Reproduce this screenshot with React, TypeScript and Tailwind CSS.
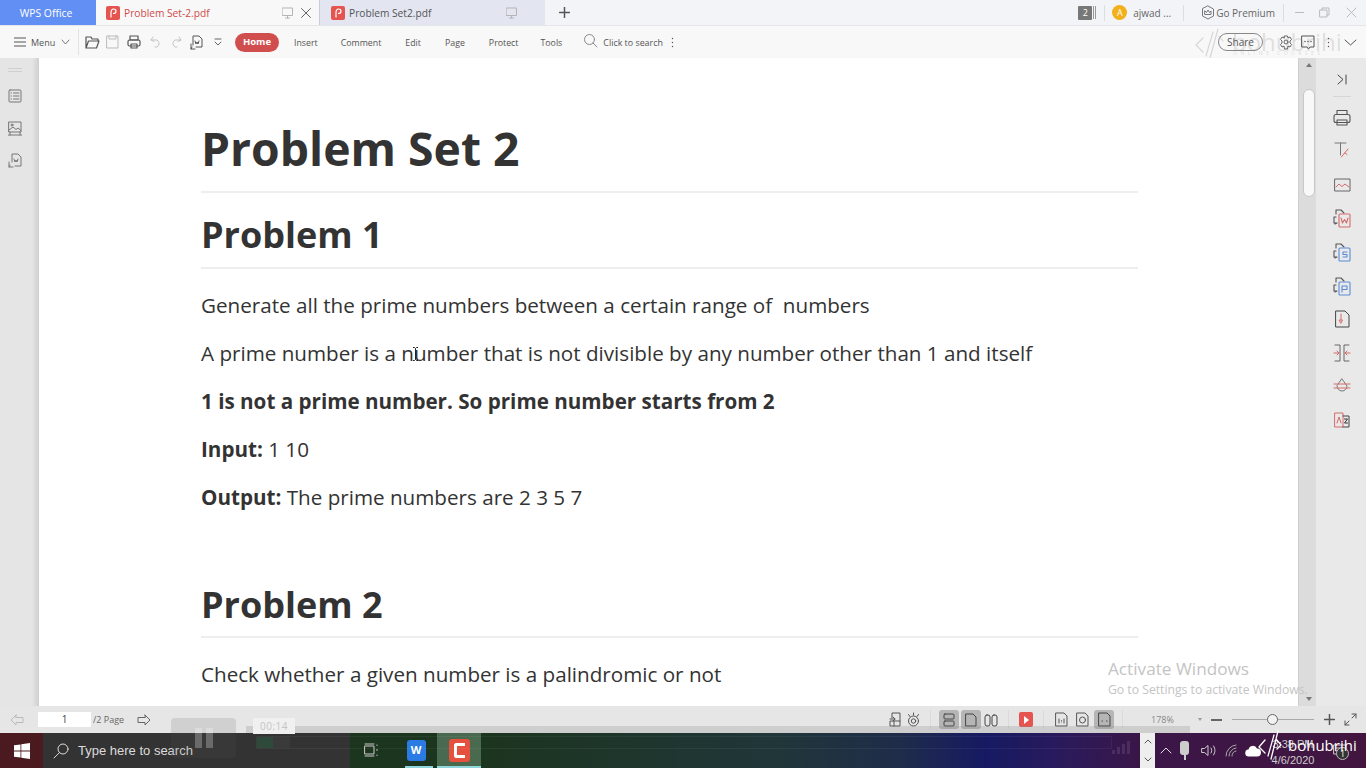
import React from "react";

const F = { fontFamily: '"Open Sans","Noto Sans",sans-serif' };

function Svg({ w = 18, h = 18, children, c = "#555", sw = 1.2, vb }: any) {
  return (
    <svg width={w} height={h} viewBox={vb || `0 0 ${w} ${h}`} fill="none" stroke={c} strokeWidth={sw} strokeLinecap="round" strokeLinejoin="round" className="shrink-0 block">
      {children}
    </svg>
  );
}

function PdfIcon() {
  return (
    <div className="w-[14px] h-[14px] rounded-[2px] bg-[#e5544f] flex items-center justify-center shrink-0">
      <svg width="10" height="10" viewBox="0 0 10 10" fill="none" stroke="#fff" strokeWidth="1.2">
        <path d="M3 9.500 L3 5 Q3 1 5.500 1 Q8 1 8 3.200 Q8 5.500 5 5.500" />
      </svg>
    </div>
  );
}

function Monitor({ c = "#b5b5b5" }: any) {
  return (
    <Svg w={11} h={12} c={c} sw={1}>
      <rect x="0.500" y="1" width="10" height="7.500" />
      <path d="M5.500 8.500V11M3.500 11h4" />
    </Svg>
  );
}

function TitleBar() {
  return (
    <div className="h-[26px] flex bg-[#f3f4f7] shrink-0 border-b border-[#e4e6ea]">
      <div className="w-[96px] bg-[#618ff3] text-white text-[10.400px] flex items-center justify-center pt-[3px] pr-[4px]">WPS Office</div>
      <div className="w-[224px] bg-[#f8f8f8] flex items-center pl-[10px] pr-[8px] border-r border-[#c9ccd6]">
        <PdfIcon />
        <span className="ml-[4px] text-[10.200px] text-[#d0494a] pt-[3px]">Problem Set-2.pdf</span>
        <div className="ml-auto flex items-center gap-[8px]">
          <Monitor />
          <Svg w={10} h={10} c="#666" sw={1}><path d="M0.500 0.500l9 9M9.500 0.500l-9 9" /></Svg>
        </div>
      </div>
      <div className="w-[225px] bg-[#e3e6f1] flex items-center pl-[11px]">
        <PdfIcon />
        <span className="ml-[4px] w-[83px] text-[10.200px] text-[#555] pt-[3px]">Problem Set2.pdf</span>
        <div className="ml-[74px]"><Monitor /></div>
      </div>
      <div className="ml-[14px] flex items-center">
        <Svg w={11} h={11} c="#555" sw={1.500}><path d="M5.500 0.500v10M0.500 5.500h10" /></Svg>
      </div>
      <div className="ml-auto flex items-center text-[10px] text-[#666]">
        <div className="w-[14px] h-[14px] bg-[#777] rounded-[1px] text-white text-[9px] flex items-center justify-center">2</div>
        <div className="ml-[1px] h-[13px] w-[3px] border-x border-[#999]" />
        <div className="ml-[8px] h-[16px] w-px bg-[#ddd]" />
        <div className="ml-[7px] w-[15px] h-[15px] rounded-full bg-[#f1b01c] text-white text-[9px] flex items-center justify-center">A</div>
        <span className="ml-[6px] pt-[2px]">ajwad ...</span>
        <div className="ml-[12px] h-[16px] w-px bg-[#ddd]" />
        <div className="ml-[17px]">
          <Svg w={14} h={15} c="#777" sw={1}>
            <path d="M7 1l5.500 3v7L7 14l-5.500-3V4z" />
            <path d="M4 6l1.500 1.500L7 5l1.500 2.500L10 6v3.500H4z" />
          </Svg>
        </div>
        <span className="ml-[1px] pt-[2px]">Go Premium</span>
        <div className="ml-[8px] h-[18px] w-px bg-[#ddd]" />
        <div className="ml-[11px] w-[9px] h-px bg-[#bbb]" />
        <div className="ml-[15px]">
          <Svg w={11} h={11} c="#bbb" sw={1}><rect x="1" y="3" width="7" height="7" /><path d="M3 3V1h7v7H8" /></Svg>
        </div>
        <div className="ml-[16px] mr-[9px]">
          <Svg w={11} h={11} c="#bbb" sw={1}><path d="M1 1l9 9M10 1l-9 9" /></Svg>
        </div>
      </div>
    </div>
  );
}

const tabs: [string, number][] = [["Insert", 23], ["Comment", 24], ["Edit", 24], ["Page", 24], ["Protect", 22], ["Tools", 0]];

function ToolBar() {
  return (
    <div className="h-[32px] flex items-center bg-[#f8f8f8] shrink-0 relative text-[#555]">
      <div className="ml-[14px]">
        <Svg w={12} h={10} c="#555" sw={1.100}><path d="M0 1h12M0 5h12M0 9h12" /></Svg>
      </div>
      <span className="ml-[5px] w-[24px] text-[9px] pt-[2px]">Menu</span>
      <div className="ml-[6px]"><Svg w={9} h={6} c="#777" sw={1}><path d="M1 1l3.500 4 3.500-4" /></Svg></div>
      <div className="ml-[8px] h-[26px] w-px bg-[#e2e2e2]" />
      <div className="ml-[6px]">
        <Svg w={15} h={14} c="#555"><path d="M1 13V2h5l1 2h6v2M1 13l2.500-7H14l-2.500 7z" /></Svg>
      </div>
      <div className="ml-[6px]"><Svg w={13} h={14} c="#bbb" sw={1}><path d="M1 1h11v12H1zM3 1v3h7V1" /></Svg></div>
      <div className="ml-[8px]">
        <Svg w={14} h={14} c="#555"><rect x="3" y="1" width="8" height="4" /><rect x="1" y="5" width="12" height="6" rx="1.500" /><rect x="4" y="9" width="6" height="4" /></Svg>
      </div>
      <div className="ml-[9px]"><Svg w={12} h={12} c="#c4c4c4" sw={1}><path d="M3 1L1 4l3 1.500M1 4h6a4 4 0 0 1 0 7H5" /></Svg></div>
      <div className="ml-[8px]"><Svg w={12} h={12} c="#c4c4c4" sw={1}><path d="M9 1l2 3-3 1.500M11 4H5a4 4 0 0 0 0 7h2" /></Svg></div>
      <div className="ml-[7px]">
        <Svg w={14} h={15} c="#555" sw={1}><path d="M4 10V1h6l3 3v8H7M2 9v5h4M3 12l-1 2" /><path d="M6 6l1 3 1-2 1 2 1-3" /></Svg>
      </div>
      <div className="ml-[11px]"><Svg w={8} h={9} c="#666" sw={1}><path d="M1 1h6M1 4l3 3 3-3" /></Svg></div>
      <div className="ml-[13px] w-[44px] h-[19px] rounded-full bg-[#d14e4e] text-white text-[9.500px] font-bold flex items-center justify-center">Home</div>
      <div className="ml-[15px] flex items-center text-[8.800px] pt-[3px]">
        {tabs.map(([t, m]) => (
          <span key={t} style={{ marginRight: m }}>{t}</span>
        ))}
      </div>
      <div className="ml-[21px] mt-[-3px]">
        <Svg w={15} h={15} c="#888" sw={1}><circle cx="6.500" cy="6.500" r="5" /><path d="M10 10l4 4" /></Svg>
      </div>
      <span className="ml-[5px] text-[8.900px] pt-[1px]">Click to search</span>
      <div className="ml-[8px]"><Svg w={3} h={11} c="#555" sw={1.400}><path d="M1.500 1.500v.01M1.500 5.500v.01M1.500 9.500v.01" /></Svg></div>
      <div className="ml-auto flex items-center">
        <div className="w-[45px] h-[18px] rounded-full border border-[#888] text-[10px] flex items-center justify-center">Share</div>
        <div className="ml-[16px]">
          <Svg w={14} h={15} c="#666" sw={1}><path d="M5.500 1h3l.5 2 2-1 1.500 2.500L11 6v2l1.500 1.500L11 12l-2-1-.5 3h-3L5 11l-2 1-1.500-2.500L3 8V6L1.500 4.500 3 2l2 1z" /><circle cx="7" cy="7" r="2" /></Svg>
        </div>
        <div className="ml-[8px]">
          <Svg w={14} h={15} c="#555" sw={1}><path d="M1 1h12v11H9l-1.500 2L6 12H1z" /><path d="M4 6.500h.01M7 6.500h.01M10 6.500h.01" strokeWidth="1.500" /></Svg>
        </div>
        <div className="ml-[12px]"><Svg w={3} h={11} c="#555" sw={1.400}><path d="M1.500 1.500v.01M1.500 5.500v.01M1.500 9.500v.01" /></Svg></div>
        <div className="ml-[14px] mr-[9px]"><Svg w={13} h={7} c="#555" sw={1}><path d="M1 1l5.500 5 5.500-5" /></Svg></div>
      </div>
    </div>
  );
}

function LeftRail() {
  return (
    <div className="w-[39px] bg-[linear-gradient(90deg,#e5e5e5_32px,#cfcfcf_39px)] shrink-0 flex flex-col items-center pr-[9px] pt-[10px]">
      <div className="w-[14px] h-[4px] border-y border-[#cfcfcf]" />
      <div className="mt-[17px]">
        <Svg w={14} h={14} c="#777" sw={1}><rect x="1" y="1" width="12" height="12" rx="1" /><path d="M3 4h.5M5.500 4H11M3 7h.5M5.500 7H11M3 10h.5M5.500 10H11" /></Svg>
      </div>
      <div className="mt-[18px]">
        <Svg w={14} h={15} c="#777" sw={1}><rect x="1" y="1" width="12" height="10" /><path d="M1 9l4-3 3 2.500 2-1.500 3 2.500M0 14h14M2 11v3M12 11v3" /><circle cx="4" cy="4" r="1" /></Svg>
      </div>
      <div className="mt-[17px]">
        <Svg w={15} h={15} c="#777" sw={1}><path d="M4 9V1h6l3 3v9H7" /><path d="M1 9v5h4M2 12l-1 2" /><path d="M6 6l1 3 1-2 1 2 1-3" /></Svg>
      </div>
    </div>
  );
}

function Doc() {
  return (
    <div className="w-[1259px] bg-white shrink-0 overflow-hidden pl-[162px] pr-[160px] text-[#333]" style={F}>
      <h1 className="mt-[55px] text-[46.300px] leading-[72px] font-bold pb-[6px] border-b-2 border-[#eee] h-[80px]">Problem Set 2</h1>
      <h2 className="mt-[16px] text-[36px] leading-[52px] font-bold h-[60px] border-b-2 border-[#eee]">Problem 1</h2>
      <p className="mt-[20px] text-[20.630px] leading-[32px]">Generate all the prime numbers between a certain range of&nbsp; numbers</p>
      <p className="mt-[16px] text-[20.630px] leading-[32px]">A prime number is a number that is not divisible by any number other than 1 and itself</p>
      <p className="mt-[16px] text-[20.630px] leading-[32px] font-bold">1 is not a prime number. So prime number starts from 2</p>
      <p className="mt-[16px] text-[20.630px] leading-[32px]"><b>Input:</b> 1 10</p>
      <p className="mt-[16px] text-[20.630px] leading-[32px]"><b>Output:</b> The prime numbers are 2 3 5 7</p>
      <h2 className="mt-[65px] text-[36px] leading-[54px] font-bold h-[60px] border-b-2 border-[#eee]">Problem 2</h2>
      <p className="mt-[20px] text-[20.630px] leading-[32px]">Check whether a given number is a palindromic or not</p>
    </div>
  );
}

const R = "#d46a6a";
const B = "#5b8bd8";

function ConvIcon({ c, letter }: any) {
  return (
    <Svg w={20} h={20} c={c} sw={1.100}>
      <path d="M4 5V1h5l3 3" stroke="#555" />
      <path d="M2 8h2M2 8v6h3M3 15l2-1" stroke="#555" />
      <rect x="7" y="5" width="11" height="13" rx="1" />
      {letter === "W" && <path d="M9 9l1.500 5 2-3.500 2 3.500 1.500-5" />}
      {letter === "S" && <path d="M15 9h-4v2.500h4V14h-4" />}
      {letter === "P" && <path d="M10 15V9h5v3.500h-5" />}
    </Svg>
  );
}

function RightRail() {
  return (
    <div className="flex-1 flex">
      <div className="w-[18px] bg-[#dcdcdc] flex flex-col items-center pl-[4px] pr-[1px] border-l border-[#d0d0d0]">
        <div className="mt-[5px] w-0 h-0 border-x-[3px] border-x-transparent border-b-[4px] border-b-[#777]" />
        <div className="mt-[22px] w-[12px] h-[108px] bg-[#f8f8f8] rounded-full border border-[#c8c8c8]" />
        <div className="mt-auto mb-[5px] w-0 h-0 border-x-[3px] border-x-transparent border-t-[4px] border-t-[#777]" />
      </div>
      <div className="flex-1 bg-[#e9e9e9] flex flex-col items-center pl-[2px] pt-[16px]">
        <Svg w={10} h={11} c="#444" sw={1}><path d="M1 1l5 4.500L1 10M9 1v9" /></Svg>
        <div className="mt-[11px] w-[18px] h-px bg-[#d6d6d6]" />
        <div className="mt-[12px]">
          <Svg w={18} h={18} c="#555" sw={1.100}><rect x="4" y="1.500" width="10" height="4" /><rect x="1" y="5.500" width="16" height="8" rx="2" /><rect x="4" y="11" width="10" height="5" /></Svg>
        </div>
        <div className="mt-[14px]">
          <Svg w={18} h={18} c="#777" sw={1}><path d="M2 2h11M7.500 2v12" /><path d="M15 8l-5 6-1.500 2" stroke={R} /><path d="M12 12l2 1.500" stroke={R} /></Svg>
        </div>
        <div className="mt-[19px]">
          <Svg w={17} h={14} c="#666" sw={1}><rect x="1" y="1" width="15" height="12" /><path d="M2 9l3-3 3 2.500L11 6l4 3" stroke={R} /></Svg>
        </div>
        <div className="mt-[17px]"><ConvIcon c={R} letter="W" /></div>
        <div className="mt-[14px]"><ConvIcon c={B} letter="S" /></div>
        <div className="mt-[14px]"><ConvIcon c={B} letter="P" /></div>
        <div className="mt-[13px]">
          <Svg w={15} h={18} c="#444" sw={1}><path d="M1 1h9l4 4v12H1z" /><path d="M6 4v6M4.500 10h3L6 13z" stroke={R} /></Svg>
        </div>
        <div className="mt-[16px]">
          <Svg w={18} h={18} c="#666" sw={1}><path d="M2 1h5v16H2M16 1h-5v16h5" /><path d="M1 9h5M4 7l2 2-2 2M17 9h-5M14 7l-2 2 2 2" stroke={R} /></Svg>
        </div>
        <div className="mt-[15px]">
          <Svg w={18} h={18} c="#777" sw={1}><path d="M9 2l5 7a5 5 0 1 1-10 0z" /><path d="M1 7h16M1 11h16" stroke={R} /></Svg>
        </div>
        <div className="mt-[16px]">
          <Svg w={18} h={18} c={R} sw={1}><path d="M2 2h8v14H2z" /><path d="M4 12l2-6 2 6" /><path d="M10 5h6v11h-6" stroke="#444" /><path d="M11.500 8h3l-3 4h3" stroke="#333" /></Svg>
        </div>
      </div>
    </div>
  );
}

function StatusBar() {
  const Act = ({ children }: any) => <div className="w-[20px] h-[19px] rounded-[3px] bg-[#b5b5b5] flex items-center justify-center">{children}</div>;
  return (
    <div className="h-[27px] bg-[#e6e6e6] shrink-0 flex items-center text-[#666]">
      <div className="ml-[10px]"><Svg w={14} h={12} c="#bbb" sw={1}><path d="M6 1L1 6l5 5V8.500h7v-5H6z" /></Svg></div>
      <div className="ml-[14px] w-[53px] h-[15px] bg-white text-[10px] flex items-center justify-center text-[#444]">1</div>
      <span className="ml-[2px] w-[31px] text-[9px] whitespace-nowrap">/2 Page</span>
      <div className="ml-[13px]"><Svg w={14} h={12} c="#666" sw={1}><path d="M8 1l5 5-5 5V8.500H1v-5h7z" /></Svg></div>
      <div className="ml-[738px]"><Svg w={12} h={15} c="#555" sw={1}><path d="M3 6V1h8v13H1V9h10M1 7h5M4 5l2 2-2 2M5 9v5" /></Svg></div>
      <div className="ml-[5px]"><Svg w={15} h={15} c="#555" sw={1}><circle cx="7.500" cy="9" r="5" /><circle cx="7.500" cy="9" r="2.200" /><path d="M7.500 1v2M2.500 2.500l1.500 2M12.500 2.500l-1.500 2" /></Svg></div>
      <div className="ml-[9px] h-[19px] w-px bg-[#dadada]" />
      <div className="ml-[8px]"><Act><Svg w={14} h={14} c="#444" sw={1}><rect x="2" y="1" width="10" height="5" rx="1" /><rect x="2" y="8" width="10" height="5" rx="1" /></Svg></Act></div>
      <div className="ml-[2px]"><Act><Svg w={12} h={14} c="#444" sw={1}><path d="M1 1h7l3 3v9H1z" /></Svg></Act></div>
      <div className="ml-[3px]"><Svg w={14} h={14} c="#444" sw={1}><rect x="1" y="2" width="5" height="11" rx="2" /><rect x="8" y="2" width="5" height="11" rx="2" /></Svg></div>
      <div className="ml-[10px] h-[19px] w-px bg-[#dadada]" />
      <div className="ml-[10px] w-[14px] h-[15px] bg-[#e5544f] rounded-[2px] flex items-center justify-center">
        <div className="w-0 h-0 border-y-[4px] border-y-transparent border-l-[5px] border-l-white" />
      </div>
      <div className="ml-[10px] h-[19px] w-px bg-[#dadada]" />
      <div className="ml-[11px]"><Svg w={13} h={15} c="#555" sw={1}><path d="M1 1h8l3 3v10H1z" /><path d="M4 7v4M9 7v4M6.500 8.500v.01M6.500 10v.01" /></Svg></div>
      <div className="ml-[8px]"><Svg w={13} h={15} c="#555" sw={1}><path d="M1 1h8l3 3v10H1z" /><circle cx="6.500" cy="8" r="3" /></Svg></div>
      <div className="ml-[5px]"><Act><Svg w={13} h={15} c="#444" sw={1}><path d="M1 1h8l3 3v10H1z" /><path d="M4 9h.5M8.500 9H9" /></Svg></Act></div>
      <div className="ml-[8px] h-[19px] w-px bg-[#dadada]" />
      <span className="ml-[28px] w-[22px] text-[9px] text-[#888]">178%</span>
      <div className="ml-[25px] w-0 h-0 border-x-[2.500px] border-x-transparent border-t-[3px] border-t-[#999]" />
      <div className="ml-[9px] w-[11px] h-[2px] bg-[#666]" />
      <div className="ml-[10px] w-[82px] h-px bg-[#aaa] relative">
        <div className="absolute left-[35px] top-[-5px] w-[11px] h-[11px] rounded-full bg-[#f2f2f2] border border-[#666]" />
      </div>
      <div className="ml-[10px]"><Svg w={11} h={11} c="#555" sw={1.500}><path d="M5.500 0.500v10M0.500 5.500h10" /></Svg></div>
      <div className="ml-[9px]"><Svg w={13} h={13} c="#555" sw={1}><path d="M8 1h4v4M12 1L8 5M5 12H1V8M1 12l4-4" /></Svg></div>
    </div>
  );
}

function TaskBar() {
  return (
    <div className="h-[35px] shrink-0 flex items-stretch bg-[linear-gradient(90deg,#1c351e_480px,#20363a_780px,#1f2c4a_900px,#161a63_985px,#2a1a5c_1060px,#3a1648_1140px,#42153f_1366px)] text-white relative" style={F}>
      <div className="w-[43px] bg-[#4b1a20] flex items-center justify-center">
        <svg width="16" height="16" viewBox="0 0 16 16" fill="#fff"><path d="M0 2.300l6.500-.9v6.200H0zM7.300 1.300L16 0v7.600H7.300zM0 8.400h6.500v6.200L0 13.700zM7.300 8.400H16V16l-8.700-1.300z" /></svg>
      </div>
      <div className="w-[307px] bg-[#333333] flex items-center pl-[10px]">
        <Svg w={16} h={16} c="#ddd" sw={1}><circle cx="10" cy="6" r="5" /><path d="M6.500 9.500L1 15" /></Svg>
        <span className="ml-[9px] text-[13px] text-[#dcdcdc]" style={{ fontFamily: '"Liberation Sans",sans-serif' }}>Type here to search</span>
      </div>
      <div className="ml-[11px] w-[20px] flex items-center justify-center">
        <Svg w={15} h={15} c="#ccc" sw={1}><rect x="1" y="3" width="9" height="8" /><path d="M1 1h9M1 13h9M13 2v.5M13 6.500v1M13 12v.5" /></Svg>
      </div>
      <div className="ml-[16px] w-[38px] flex flex-col items-center justify-center relative">
        <div className="w-[19px] h-[21px] rounded-[3px] bg-[#2b7be4] flex items-center justify-center text-[11px] font-bold">W</div>
        <div className="absolute bottom-0 left-[8px] w-[28px] h-[2px] bg-[#8fd6dc]" />
      </div>
      <div className="ml-[2px] w-[44px] bg-[#4a6a50] flex items-center justify-center relative">
        <div className="w-[21px] h-[23px] rounded-[3px] bg-[#e5503f] flex items-center justify-center">
          <div className="w-[11px] h-[15px] border-l-[3px] border-y-[3px] border-white rounded-l-[3px]" />
        </div>
        <div className="absolute bottom-0 inset-x-0 h-[2px] bg-[#8fd6dc]" />
      </div>
      <div className="ml-auto w-[15px] bg-[#eeeeee] flex flex-col items-center justify-around mr-[211px] text-[#555]">
        <Svg w={8} h={5} c="#555" sw={1}><path d="M1 4l3-3 3 3" /></Svg>
        <Svg w={8} h={5} c="#555" sw={1}><path d="M1 1l3 3 3-3" /></Svg>
      </div>
      <div className="absolute right-0 top-0 h-full w-[211px] flex items-center pl-[5px] text-[12px]">
        <Svg w={12} h={7} c="#ddd" sw={1}><path d="M1 6l5-5 5 5" /></Svg>
        <div className="ml-[8px] w-[9px] h-[20px]">
          <div className="w-[9px] h-[14px] rounded-[3px] bg-[#ccc]" />
          <div className="mx-auto w-[2px] h-[5px] bg-[#ccc]" />
        </div>
        <div className="ml-[12px]"><Svg w={15} h={13} c="#ccc" sw={1}><path d="M1 4.500h2.500L7 1.500v10L3.500 8.500H1zM10 4c1 1.500 1 3.500 0 5M12.500 2c2 3 2 6 0 9" /></Svg></div>
        <div className="ml-[9px]"><Svg w={12} h={13} c="#aaa" sw={1}><path d="M1 12a11 11 0 0 1 10-11M4 12a8 8 0 0 1 7-8M7 12a5 5 0 0 1 4-5" /></Svg></div>
        <div className="ml-[8px]">
          <svg width="16" height="12" viewBox="0 0 16 12" fill="#fff"><path d="M4 11.500a3.500 3.500 0 0 1-.5-7 4.500 4.500 0 0 1 8.500-1 4 4 0 0 1 0 8z" /></svg>
        </div>
        <div className="ml-[10px] flex flex-col items-center leading-[16px] text-[11px] text-[#ccc] w-[44px] mt-[2px] whitespace-nowrap" style={{ fontFamily: '"Liberation Sans",sans-serif' }}>
          <span>3:38 PM</span>
          <span>4/6/2020</span>
        </div>
        <div className="ml-[18px] relative">
          <Svg w={14} h={14} c="#ccc" sw={1}><path d="M1 1h12v9H1z" /><path d="M3 4h8M3 7h8" /></Svg>
          <div className="absolute left-[3px] top-[3px] w-[13px] h-[13px] rounded-full bg-[#333] border border-[#bbb] text-[9px] flex items-center justify-center leading-none">1</div>
        </div>
      </div>
    </div>
  );
}

export default function App() {
  return (
    <div className="w-[1366px] h-[768px] overflow-hidden flex flex-col relative bg-[#e9e9e9] text-[#555]" style={F}>
      <TitleBar />
      <ToolBar />
      <div className="flex-1 min-h-0 flex">
        <LeftRail />
        <Doc />
        <RightRail />
      </div>
      <StatusBar />
      <TaskBar />

      {/* mouse cursor over the document */}
      <div className="absolute left-[412px] top-[347px] pointer-events-none">
        <svg width="7" height="14" viewBox="0 0 7 14" fill="none" stroke="#222" strokeWidth="1" className="block">
          <path d="M1 0.500h1.500L3.500 1.500 4.500 0.500H6M3.500 1.500v11M1 13.500h1.500l1-1 1 1H6" />
        </svg>
      </div>

      {/* Windows notice, paused-video overlay, watermarks */}
      <div className="absolute left-[1108px] top-[657px] text-[#c4c4c4] pointer-events-none">
        <div className="text-[17.200px] leading-[24px]">Activate Windows</div>
        <div className="text-[12.200px] leading-[18px] whitespace-nowrap">Go to Settings to activate Windows.</div>
      </div>
      <div className="absolute left-[246px] top-[726px] w-[944px] h-[7px] bg-[#888]/25" />
      <div className="absolute left-[171px] top-[718px] w-[65px] h-[40px] rounded-[4px] bg-[#555]/15 flex items-center justify-center gap-[4px]">
        <div className="w-[7px] h-[20px] bg-white/25" />
        <div className="w-[7px] h-[20px] bg-white/25" />
      </div>
      <div className="absolute left-[253px] top-[718px] w-[42px] h-[16px] bg-[#f0f0f0] text-[10px] tracking-[0.5px] text-[#c4c4c4] flex items-center justify-center">00:14</div>
      <div className="absolute left-[257px] top-[737px] w-[33px] h-[11px] bg-[#3a3a3a]">
        <div className="w-[16px] h-full bg-[#2e4a3a]" />
      </div>
      <div className="absolute left-[256px] top-[736px] w-[856px] h-[13px] border border-white/5" />
      <div className="absolute left-[1112px] top-[740px] flex items-end gap-[2px] h-[14px]">
        <div className="w-[3px] h-[4px] bg-white/10" />
        <div className="w-[3px] h-[7px] bg-white/10" />
        <div className="w-[3px] h-[10px] bg-white/10" />
        <div className="w-[3px] h-[13px] bg-white/10" />
      </div>
      <div className="absolute left-[1288px] top-[733px] text-white text-[15px] leading-[24px] pointer-events-none">bohubrihi</div>
      <div className="absolute left-[1258px] top-[730px] pointer-events-none">
        <Svg w={24} h={30} c="#fff" sw={1.300}><path d="M7 10L1 17l6 6M10 26L16 5M13 29L20 1M18 9l5 6-4 4" /></Svg>
      </div>
      <div className="absolute left-[1195px] top-[28px] pointer-events-none opacity-25">
        <Svg w={30} h={30} c="#777" sw={1.200}><path d="M8 10L1 17l7 7M11 28L18 4M15 30L23 1M24 8l4 5" /></Svg>
      </div>
      <div className="absolute left-[1232px] top-[26px] text-[#777]/20 text-[24px] leading-[32px] pointer-events-none">bohubrihi</div>
      <div className="absolute left-[1233px] top-[49px] text-[#777]/25 text-[5px] leading-[8px] tracking-[3.500px] pointer-events-none whitespace-nowrap">ONLINE COURSES</div>
    </div>
  );
}
